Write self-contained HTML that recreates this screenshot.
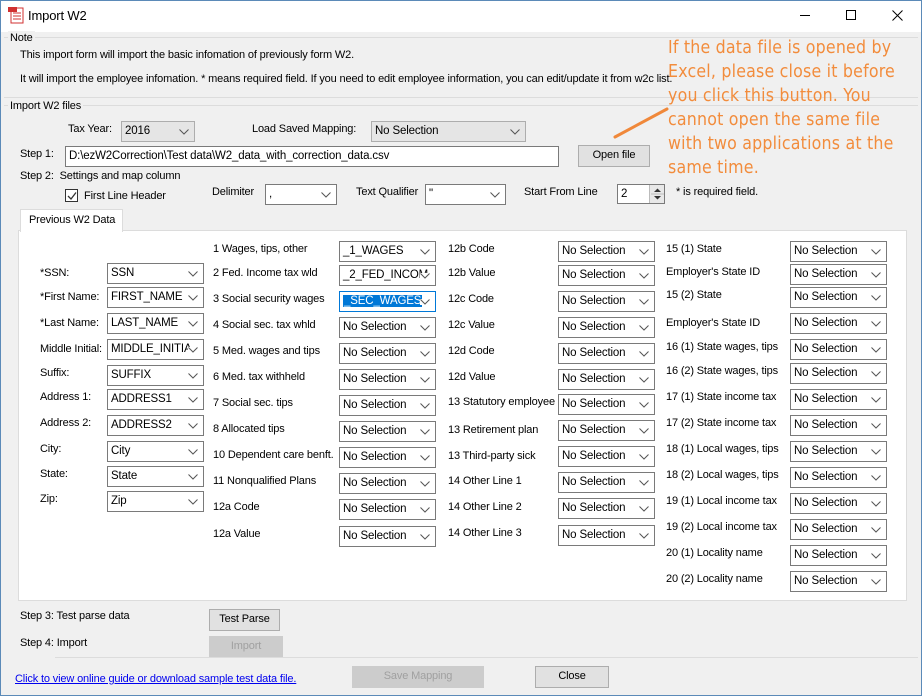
<!DOCTYPE html>
<html><head><meta charset="utf-8"><style>
*{box-sizing:border-box;margin:0;padding:0}
body{width:922px;height:696px;overflow:hidden;background:#f0f0f0;font-family:"Liberation Sans",sans-serif;font-size:11px;color:#000;position:relative;letter-spacing:-0.15px}
.a{position:absolute;white-space:nowrap}
.t{position:absolute;white-space:nowrap;line-height:14px;margin-top:1px}
.c{position:absolute;width:97px;height:21px;border:1px solid #7a7a7a;background:#fff;line-height:19px;padding-left:3px;overflow:hidden;font-size:11.5px}
.c svg{position:absolute;right:5px;top:7px;background:#fff}
.b{position:absolute;border:1px solid #adadad;background:#e1e1e1;text-align:center;line-height:19px}
.hl{position:absolute;height:1px;background:#dcdcdc}
</style></head><body>
<div class="a" style="left:0;top:0;width:922px;height:32px;background:#fff"></div>
<div class="a" style="left:0;top:0;width:922px;height:696px;border:1px solid #5b8ab8;pointer-events:none;z-index:9"></div>
<svg class="a" style="left:8px;top:6px" width="16" height="18"><rect x="3" y="2" width="12" height="15" fill="#fff" stroke="#d03030"/><line x1="5" y1="7" x2="13" y2="7" stroke="#d03030"/><line x1="5" y1="10" x2="13" y2="10" stroke="#d03030"/><line x1="5" y1="13" x2="13" y2="13" stroke="#d03030"/><rect x="0" y="1" width="9" height="5" fill="#d03030"/></svg>
<div class="t" style="left:28px;top:8px;font-size:13px">Import W2</div>
<div class="a" style="left:800px;top:15px;width:10px;height:1px;background:#000"></div>
<div class="a" style="left:846px;top:10px;width:10px;height:10px;border:1px solid #000"></div>
<svg class="a" style="left:892px;top:10px" width="11" height="11"><path d="M0.5 0.5L10.5 10.5M10.5 0.5L0.5 10.5" stroke="#000"/></svg>

<div class="hl" style="left:4px;top:37px;width:914px"></div>
<div class="t" style="left:8px;top:30px;background:#f0f0f0;padding:0 2px">Note</div>
<div class="t" style="left:20px;top:47px">This import form will import the basic infomation of previously form W2.</div>
<div class="t" style="left:20px;top:71px">It will import the employee infomation. * means required field. If you need to edit employee information, you can edit/update it from w2c list.</div>
<div class="hl" style="left:4px;top:97px;width:914px"></div>
<div class="hl" style="left:4px;top:105px;width:914px"></div>
<div class="t" style="left:8px;top:98px;background:#f0f0f0;padding:0 2px">Import W2 files</div>

<div class="t" style="left:68px;top:121px">Tax Year:</div>
<div class="c" style="left:121px;top:121px;width:74px;height:21px;background:#e5e5e5;border-color:#adadad">2016<svg width="10" height="6" style="background:none"><path d="M0.5 0.5L5 5L9.5 0.5" fill="none" stroke="#555"/></svg></div>
<div class="t" style="left:252px;top:121px">Load Saved Mapping:</div>
<div class="c" style="left:371px;top:121px;width:155px;background:#e5e5e5;border-color:#adadad">No Selection<svg width="10" height="6" style="background:none"><path d="M0.5 0.5L5 5L9.5 0.5" fill="none" stroke="#555"/></svg></div>

<div class="t" style="left:20px;top:146px">Step 1:</div>
<div class="c" style="left:65px;top:146px;width:494px;height:21px">D:\ezW2Correction\Test data\W2_data_with_correction_data.csv</div>
<div class="b" style="left:578px;top:145px;width:72px;height:22px">Open file</div>
<div class="t" style="left:20px;top:168px">Step 2:&nbsp; Settings and map column</div>
<div class="a" style="left:65px;top:189px;width:13px;height:13px;border:1px solid #333;background:#fff"><svg style="position:absolute;left:1px;top:1px" width="10" height="10"><path d="M1 5L4 8L9 1.5" fill="none" stroke="#333" stroke-width="1.3"/></svg></div>
<div class="t" style="left:84px;top:188px">First Line Header</div>
<div class="t" style="left:212px;top:184px">Delimiter</div>
<div class="c" style="left:265px;top:184px;width:72px">,<svg width="10" height="6"><path d="M0.5 0.5L5 5L9.5 0.5" fill="none" stroke="#555"/></svg></div>
<div class="t" style="left:356px;top:184px">Text Qualifier</div>
<div class="c" style="left:425px;top:184px;width:81px">"<svg width="10" height="6"><path d="M0.5 0.5L5 5L9.5 0.5" fill="none" stroke="#555"/></svg></div>
<div class="t" style="left:524px;top:184px">Start From Line</div>
<div class="c" style="left:617px;top:184px;width:48px;height:20px">2</div>
<div class="a" style="left:649px;top:185px;width:15px;height:18px;background:#e8e8e8;border-left:1px solid #bbb"><svg width="15" height="18"><path d="M4 7L7.5 3.5L11 7Z M4 11L7.5 14.5L11 11Z" fill="#333"/><line x1="1" y1="9" x2="14" y2="9" stroke="#bbb"/></svg></div>
<div class="t" style="left:676px;top:184px">* is required field.</div>

<div class="a" style="left:18px;top:230px;width:889px;height:371px;background:#fff;border:1px solid #dcdcdc"></div>
<div class="a" style="left:20px;top:209px;width:103px;height:23px;background:#fff;border:1px solid #dcdcdc;border-bottom:none;padding:4px 0 0 8px">Previous W2 Data</div>

<div class="t" style="left:40px;top:265px">*SSN:</div><div class="c" style="left:107px;top:263px">SSN<svg width="10" height="6"><path d="M0.5 0.5L5 5L9.5 0.5" fill="none" stroke="#555"/></svg></div>
<div class="t" style="left:40px;top:289px">*First Name:</div><div class="c" style="left:107px;top:287px">FIRST_NAME<svg width="10" height="6"><path d="M0.5 0.5L5 5L9.5 0.5" fill="none" stroke="#555"/></svg></div>
<div class="t" style="left:40px;top:315px">*Last Name:</div><div class="c" style="left:107px;top:313px">LAST_NAME<svg width="10" height="6"><path d="M0.5 0.5L5 5L9.5 0.5" fill="none" stroke="#555"/></svg></div>
<div class="t" style="left:40px;top:341px">Middle Initial:</div><div class="c" style="left:107px;top:339px">MIDDLE_INITIA<svg width="10" height="6"><path d="M0.5 0.5L5 5L9.5 0.5" fill="none" stroke="#555"/></svg></div>
<div class="t" style="left:40px;top:365px">Suffix:</div><div class="c" style="left:107px;top:365px">SUFFIX<svg width="10" height="6"><path d="M0.5 0.5L5 5L9.5 0.5" fill="none" stroke="#555"/></svg></div>
<div class="t" style="left:40px;top:389px">Address 1:</div><div class="c" style="left:107px;top:389px">ADDRESS1<svg width="10" height="6"><path d="M0.5 0.5L5 5L9.5 0.5" fill="none" stroke="#555"/></svg></div>
<div class="t" style="left:40px;top:415px">Address 2:</div><div class="c" style="left:107px;top:415px">ADDRESS2<svg width="10" height="6"><path d="M0.5 0.5L5 5L9.5 0.5" fill="none" stroke="#555"/></svg></div>
<div class="t" style="left:40px;top:441px">City:</div><div class="c" style="left:107px;top:441px">City<svg width="10" height="6"><path d="M0.5 0.5L5 5L9.5 0.5" fill="none" stroke="#555"/></svg></div>
<div class="t" style="left:40px;top:466px">State:</div><div class="c" style="left:107px;top:466px">State<svg width="10" height="6"><path d="M0.5 0.5L5 5L9.5 0.5" fill="none" stroke="#555"/></svg></div>
<div class="t" style="left:40px;top:491px">Zip:</div><div class="c" style="left:107px;top:491px">Zip<svg width="10" height="6"><path d="M0.5 0.5L5 5L9.5 0.5" fill="none" stroke="#555"/></svg></div>

<div class="t" style="left:213px;top:241px">1 Wages, tips, other</div><div class="c" style="left:339px;top:241px">_1_WAGES<svg width="10" height="6"><path d="M0.5 0.5L5 5L9.5 0.5" fill="none" stroke="#555"/></svg></div>
<div class="t" style="left:213px;top:265px">2 Fed. Income tax wld</div><div class="c" style="left:339px;top:265px">_2_FED_INCOM<svg width="10" height="6"><path d="M0.5 0.5L5 5L9.5 0.5" fill="none" stroke="#555"/></svg></div>
<div class="t" style="left:213px;top:291px">3 Social security wages</div><div class="c" style="left:339px;top:291px;border-color:#0078d7"><span style="background:#0078d7;color:#fff;padding:0 1px">_SEC_WAGES</span><svg width="10" height="6"><path d="M0.5 0.5L5 5L9.5 0.5" fill="none" stroke="#555"/></svg></div>
<div class="t" style="left:213px;top:317px">4 Social sec. tax whld</div><div class="c" style="left:339px;top:317px">No Selection<svg width="10" height="6"><path d="M0.5 0.5L5 5L9.5 0.5" fill="none" stroke="#555"/></svg></div>
<div class="t" style="left:213px;top:343px">5 Med. wages and tips</div><div class="c" style="left:339px;top:343px">No Selection<svg width="10" height="6"><path d="M0.5 0.5L5 5L9.5 0.5" fill="none" stroke="#555"/></svg></div>
<div class="t" style="left:213px;top:369px">6 Med. tax withheld</div><div class="c" style="left:339px;top:369px">No Selection<svg width="10" height="6"><path d="M0.5 0.5L5 5L9.5 0.5" fill="none" stroke="#555"/></svg></div>
<div class="t" style="left:213px;top:395px">7 Social sec. tips</div><div class="c" style="left:339px;top:395px">No Selection<svg width="10" height="6"><path d="M0.5 0.5L5 5L9.5 0.5" fill="none" stroke="#555"/></svg></div>
<div class="t" style="left:213px;top:421px">8 Allocated tips</div><div class="c" style="left:339px;top:421px">No Selection<svg width="10" height="6"><path d="M0.5 0.5L5 5L9.5 0.5" fill="none" stroke="#555"/></svg></div>
<div class="t" style="left:213px;top:447px">10 Dependent care benft.</div><div class="c" style="left:339px;top:447px">No Selection<svg width="10" height="6"><path d="M0.5 0.5L5 5L9.5 0.5" fill="none" stroke="#555"/></svg></div>
<div class="t" style="left:213px;top:473px">11 Nonqualified Plans</div><div class="c" style="left:339px;top:473px">No Selection<svg width="10" height="6"><path d="M0.5 0.5L5 5L9.5 0.5" fill="none" stroke="#555"/></svg></div>
<div class="t" style="left:213px;top:499px">12a Code</div><div class="c" style="left:339px;top:499px">No Selection<svg width="10" height="6"><path d="M0.5 0.5L5 5L9.5 0.5" fill="none" stroke="#555"/></svg></div>
<div class="t" style="left:213px;top:526px">12a Value</div><div class="c" style="left:339px;top:526px">No Selection<svg width="10" height="6"><path d="M0.5 0.5L5 5L9.5 0.5" fill="none" stroke="#555"/></svg></div>

<div class="t" style="left:448px;top:241px">12b Code</div><div class="c" style="left:558px;top:241px">No Selection<svg width="10" height="6"><path d="M0.5 0.5L5 5L9.5 0.5" fill="none" stroke="#555"/></svg></div>
<div class="t" style="left:448px;top:265px">12b Value</div><div class="c" style="left:558px;top:265px">No Selection<svg width="10" height="6"><path d="M0.5 0.5L5 5L9.5 0.5" fill="none" stroke="#555"/></svg></div>
<div class="t" style="left:448px;top:291px">12c Code</div><div class="c" style="left:558px;top:291px">No Selection<svg width="10" height="6"><path d="M0.5 0.5L5 5L9.5 0.5" fill="none" stroke="#555"/></svg></div>
<div class="t" style="left:448px;top:317px">12c Value</div><div class="c" style="left:558px;top:317px">No Selection<svg width="10" height="6"><path d="M0.5 0.5L5 5L9.5 0.5" fill="none" stroke="#555"/></svg></div>
<div class="t" style="left:448px;top:343px">12d Code</div><div class="c" style="left:558px;top:343px">No Selection<svg width="10" height="6"><path d="M0.5 0.5L5 5L9.5 0.5" fill="none" stroke="#555"/></svg></div>
<div class="t" style="left:448px;top:369px">12d Value</div><div class="c" style="left:558px;top:369px">No Selection<svg width="10" height="6"><path d="M0.5 0.5L5 5L9.5 0.5" fill="none" stroke="#555"/></svg></div>
<div class="t" style="left:448px;top:394px">13 Statutory employee</div><div class="c" style="left:558px;top:394px">No Selection<svg width="10" height="6"><path d="M0.5 0.5L5 5L9.5 0.5" fill="none" stroke="#555"/></svg></div>
<div class="t" style="left:448px;top:422px">13 Retirement plan</div><div class="c" style="left:558px;top:420px">No Selection<svg width="10" height="6"><path d="M0.5 0.5L5 5L9.5 0.5" fill="none" stroke="#555"/></svg></div>
<div class="t" style="left:448px;top:448px">13 Third-party sick</div><div class="c" style="left:558px;top:446px">No Selection<svg width="10" height="6"><path d="M0.5 0.5L5 5L9.5 0.5" fill="none" stroke="#555"/></svg></div>
<div class="t" style="left:448px;top:473px">14 Other Line 1</div><div class="c" style="left:558px;top:472px">No Selection<svg width="10" height="6"><path d="M0.5 0.5L5 5L9.5 0.5" fill="none" stroke="#555"/></svg></div>
<div class="t" style="left:448px;top:499px">14 Other Line 2</div><div class="c" style="left:558px;top:498px">No Selection<svg width="10" height="6"><path d="M0.5 0.5L5 5L9.5 0.5" fill="none" stroke="#555"/></svg></div>
<div class="t" style="left:448px;top:525px">14 Other Line 3</div><div class="c" style="left:558px;top:525px">No Selection<svg width="10" height="6"><path d="M0.5 0.5L5 5L9.5 0.5" fill="none" stroke="#555"/></svg></div>

<div class="t" style="left:666px;top:241px">15 (1) State</div><div class="c" style="left:790px;top:241px">No Selection<svg width="10" height="6"><path d="M0.5 0.5L5 5L9.5 0.5" fill="none" stroke="#555"/></svg></div>
<div class="t" style="left:666px;top:264px">Employer's State ID</div><div class="c" style="left:790px;top:264px">No Selection<svg width="10" height="6"><path d="M0.5 0.5L5 5L9.5 0.5" fill="none" stroke="#555"/></svg></div>
<div class="t" style="left:666px;top:287px">15 (2) State</div><div class="c" style="left:790px;top:287px">No Selection<svg width="10" height="6"><path d="M0.5 0.5L5 5L9.5 0.5" fill="none" stroke="#555"/></svg></div>
<div class="t" style="left:666px;top:315px">Employer's State ID</div><div class="c" style="left:790px;top:313px">No Selection<svg width="10" height="6"><path d="M0.5 0.5L5 5L9.5 0.5" fill="none" stroke="#555"/></svg></div>
<div class="t" style="left:666px;top:339px">16 (1) State wages, tips</div><div class="c" style="left:790px;top:339px">No Selection<svg width="10" height="6"><path d="M0.5 0.5L5 5L9.5 0.5" fill="none" stroke="#555"/></svg></div>
<div class="t" style="left:666px;top:363px">16 (2) State wages, tips</div><div class="c" style="left:790px;top:363px">No Selection<svg width="10" height="6"><path d="M0.5 0.5L5 5L9.5 0.5" fill="none" stroke="#555"/></svg></div>
<div class="t" style="left:666px;top:389px">17 (1) State income tax</div><div class="c" style="left:790px;top:389px">No Selection<svg width="10" height="6"><path d="M0.5 0.5L5 5L9.5 0.5" fill="none" stroke="#555"/></svg></div>
<div class="t" style="left:666px;top:415px">17 (2) State income tax</div><div class="c" style="left:790px;top:415px">No Selection<svg width="10" height="6"><path d="M0.5 0.5L5 5L9.5 0.5" fill="none" stroke="#555"/></svg></div>
<div class="t" style="left:666px;top:441px">18 (1) Local wages, tips</div><div class="c" style="left:790px;top:441px">No Selection<svg width="10" height="6"><path d="M0.5 0.5L5 5L9.5 0.5" fill="none" stroke="#555"/></svg></div>
<div class="t" style="left:666px;top:467px">18 (2) Local wages, tips</div><div class="c" style="left:790px;top:467px">No Selection<svg width="10" height="6"><path d="M0.5 0.5L5 5L9.5 0.5" fill="none" stroke="#555"/></svg></div>
<div class="t" style="left:666px;top:493px">19 (1) Local income tax</div><div class="c" style="left:790px;top:493px">No Selection<svg width="10" height="6"><path d="M0.5 0.5L5 5L9.5 0.5" fill="none" stroke="#555"/></svg></div>
<div class="t" style="left:666px;top:519px">19 (2) Local income tax</div><div class="c" style="left:790px;top:519px">No Selection<svg width="10" height="6"><path d="M0.5 0.5L5 5L9.5 0.5" fill="none" stroke="#555"/></svg></div>
<div class="t" style="left:666px;top:545px">20 (1) Locality name</div><div class="c" style="left:790px;top:545px">No Selection<svg width="10" height="6"><path d="M0.5 0.5L5 5L9.5 0.5" fill="none" stroke="#555"/></svg></div>
<div class="t" style="left:666px;top:571px">20 (2) Locality name</div><div class="c" style="left:790px;top:571px">No Selection<svg width="10" height="6"><path d="M0.5 0.5L5 5L9.5 0.5" fill="none" stroke="#555"/></svg></div>

<div class="t" style="left:20px;top:608px">Step 3: Test parse data</div>
<div class="b" style="left:209px;top:609px;width:71px;height:22px">Test Parse</div>
<div class="t" style="left:20px;top:635px">Step 4: Import</div>
<div class="b" style="left:209px;top:636px;width:74px;height:22px;color:#a0a0a0;border-color:#ccc;background:#ccc">Import</div>
<div class="hl" style="left:55px;top:657px;width:863px"></div>
<div class="t" style="left:15px;top:671px;color:#0000ee;text-decoration:underline">Click to view online guide or download sample test data file.</div>
<div class="b" style="left:352px;top:666px;width:132px;height:22px;color:#a0a0a0;border-color:#ccc;background:#ccc">Save Mapping</div>
<div class="b" style="left:535px;top:666px;width:74px;height:22px">Close</div>

<svg class="a" style="left:612px;top:104px" width="60" height="40"><line x1="3" y1="33" x2="55" y2="5" stroke="#f0883a" stroke-width="3" stroke-linecap="round"/></svg>
<div class="a" style="left:668px;top:36px;font-size:17.6px;line-height:24px;color:#f28c3c;letter-spacing:0.2px;font-family:'DejaVu Sans Condensed','Liberation Sans',sans-serif">If the data file is opened by<br>Excel, please close it before<br>you click this button. You<br>cannot open the same file<br>with two applications at the<br>same time.</div>
</body></html>
